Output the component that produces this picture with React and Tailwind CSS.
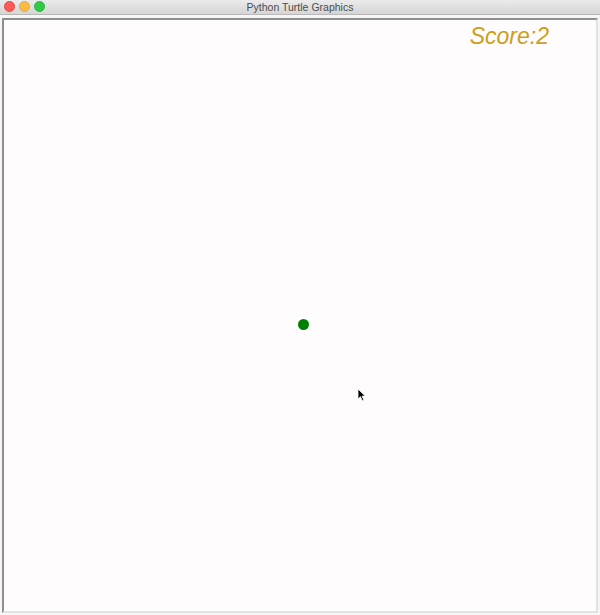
export default function App() {
    return (
        <div className="w-[600px] h-[615px] bg-[#ececec] flex flex-col overflow-hidden" style={{ fontFamily: '"Liberation Sans", Arial, sans-serif' }}>
            {/* title bar */}
            <div className="relative h-[15px] shrink-0 bg-gradient-to-b from-[#ebebeb] to-[#d5d5d5] border-b border-[#b9b9b9] flex items-center justify-center">
                <div className="absolute left-[4px] top-[1px] flex gap-[4px]">
                    <span className="w-[11px] h-[11px] rounded-full bg-[#fc5b57] border border-[#e8463f]" />
                    <span className="w-[11px] h-[11px] rounded-full bg-[#fdbc40] border border-[#e5a933]" />
                    <span className="w-[11px] h-[11px] rounded-full bg-[#34c84a] border border-[#2bb33d]" />
                </div>
                <span className="text-[10.5px] leading-none text-[#4c4c4c]">Python Turtle Graphics</span>
            </div>

            {/* canvas area */}
            <div className="flex-1 flex pl-[2px] pr-[2px] pt-[3px] pb-[2px] bg-[#f6f6f6]">
                <div className="flex-1 relative bg-[#fefcfd] border-l-2 border-t-2 border-l-[#8e8e8e] border-t-[#8e8e8e] border-r-2 border-b-2 border-r-[#e2e2e2] border-b-[#e2e2e2]">
                    <div className="absolute right-[47px] top-[-1px] text-[23px] italic text-[#cc9e22]">Score:2</div>
                    <div className="absolute left-[294px] top-[299px] w-[11px] h-[11px] rounded-full bg-[#008000]" />
                    <svg className="absolute left-[353px] top-[368px]" width="10" height="14" viewBox="0 0 10 14">
                        <path d="M1 1 L1 11 L3.5 8.7 L5.3 12.8 L6.9 12.1 L5.1 8.1 L8.3 8.1 Z" fill="#000" stroke="#fff" strokeWidth="0.8" />
                    </svg>
                </div>
            </div>
        </div>
    );
}
